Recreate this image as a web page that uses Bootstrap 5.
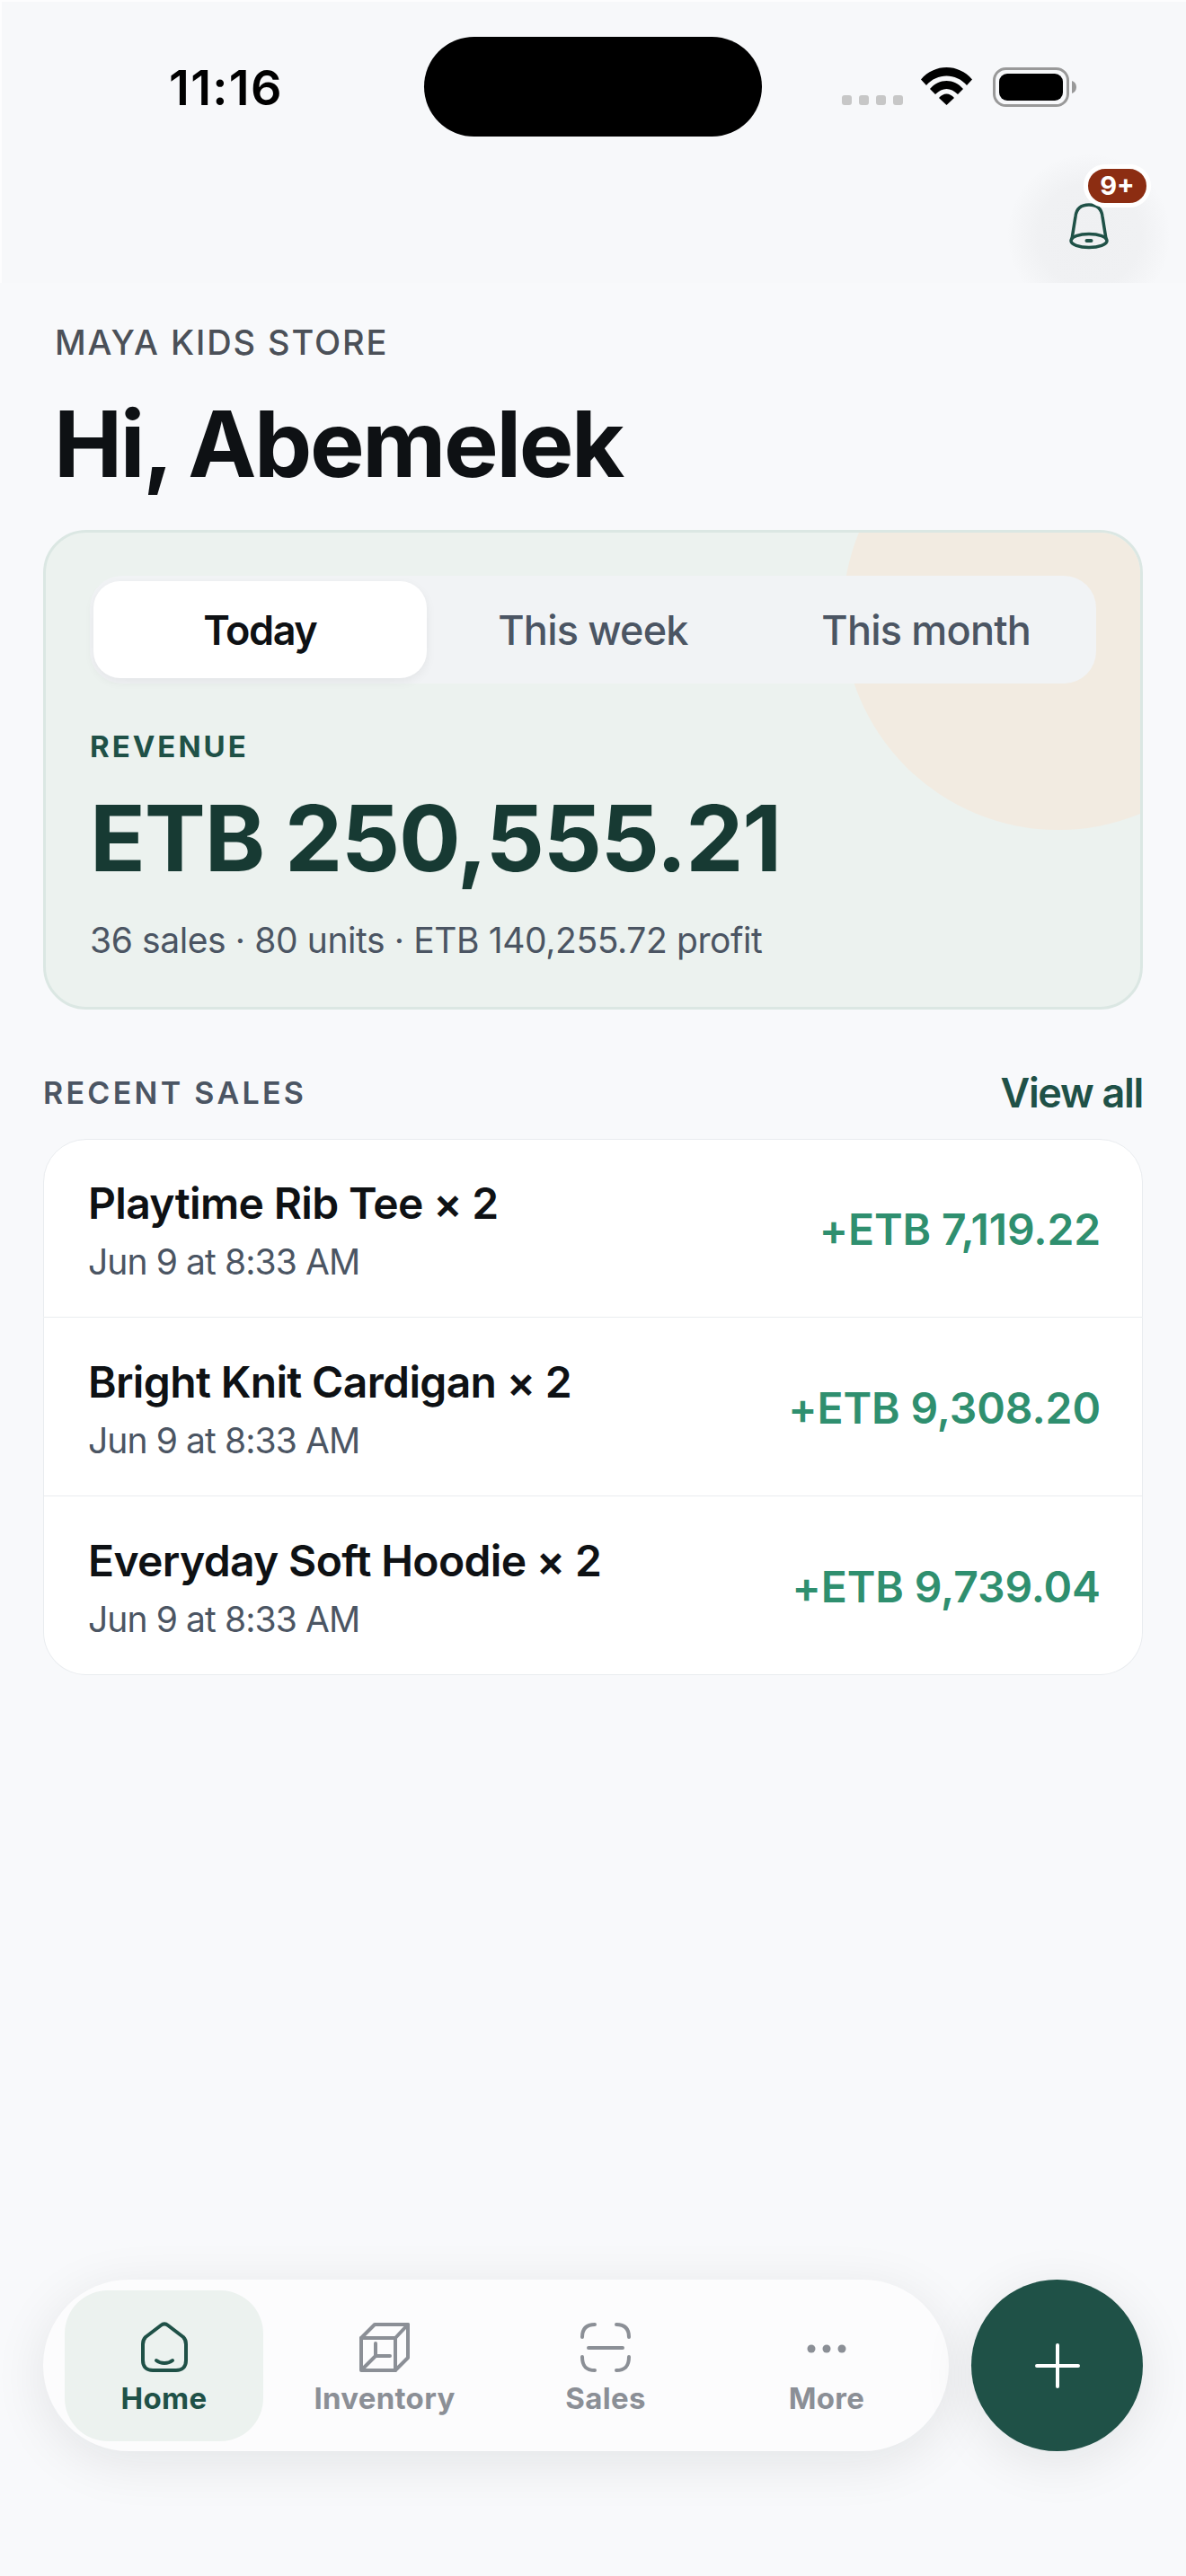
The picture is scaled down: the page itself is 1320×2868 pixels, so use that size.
<!DOCTYPE html>
<html lang="en">
<head>
    <meta charset="UTF-8">
    <meta name="viewport" content="width=device-width, initial-scale=1.0">
    <title>Maya Kids Store</title>
    <link href="https://cdn.jsdelivr.net/npm/bootstrap@5.3.0/dist/css/bootstrap.min.css" rel="stylesheet">
    <style>
        body { font-family: Inter, "Liberation Sans", sans-serif; background: #f8f9fb; color: #0e1114; width: 1320px; min-height: 2868px; }
        .screen { min-height: 2868px; }

        /* status bar + header strip */
        .top-strip { height: 315px; background: #f7f8fa; overflow: hidden; box-shadow: inset 2px 2px 0 #fdfdfe; }
        .status-row { height: 152px; padding-top: 41px; }
        .clock { width: 284px; margin-left: 188px; font-size: 54px; font-weight: 600; line-height: 1; padding-top: 30px; color: #000; letter-spacing: 1.3px; }
        .island { width: 376px; height: 111px; background: #000; border-radius: 56px; }
        .sig-dots { margin-left: 89px; margin-top: 65px; width: 68px; }
        .sig-dots i { width: 11px; height: 11px; border-radius: 3px; background: #c7c7c7; display: block; }
        .wifi-ic { margin-left: 20px; margin-top: 34px; }
        .batt-ic { margin-left: 23px; margin-top: 34px; }
        .bell-row { padding: 20px 18px 0 0; }
        .bell-btn { width: 180px; height: 180px; border-radius: 50%; border: 0; background: radial-gradient(circle, #eff0f2 0, #f0f1f3 45%, rgba(240, 241, 243, 0) 72%); position: relative; padding: 54px 0 0 0; display: flex; justify-content: center; align-items: flex-start; }
        .bell-count { position: absolute; left: 84px; top: 11px; width: 75px; height: 48px; border: 5px solid #fff; border-radius: 24px; background: #8c2d12; color: #fff; font-size: 29px; font-weight: 700; line-height: 38px; text-align: center; }

        .store-label { font-size: 38px; font-weight: 500; letter-spacing: 1.9px; color: #4b5058; line-height: 46px; margin: 43px 0 0 61px; }
        .hi-title { font-size: 102px; font-weight: 700; letter-spacing: -2.4px; line-height: 122px; margin: 29px 0 0 60px; color: #0e1114; }

        /* revenue card */
        .rev-card { margin: 35px 48px 0; height: 534px; background: #ecf2ef; border: 3px solid #dbe7e3; border-radius: 48px; overflow: hidden; position: relative; padding: 48px 49px 0; }
        .rev-blob { position: absolute; width: 480px; height: 480px; border-radius: 50%; background: #f2ebe1; left: 887px; top: -149px; }
        .range-tabs { position: relative; background: #f1f3f5; border-radius: 36px; height: 120px; padding: 6px 4px; }
        .range-tabs .btn { flex: 1 1 0; border: 0; border-radius: 30px; font-size: 45px; font-weight: 500; color: #4b5563; letter-spacing: -.8px; padding: 2px 0 0; }
        .range-tabs .btn.active { background: #fff; color: #0e1114; font-weight: 600; letter-spacing: -1.4px; box-shadow: 0 4px 12px rgba(15, 25, 25, .06); }
        .rev-label { position: relative; font-size: 33px; font-weight: 700; letter-spacing: 3px; color: #1f5147; line-height: 40px; margin-top: 50px; }
        .rev-amount { position: relative; font-size: 102px; font-weight: 700; color: #173a33; line-height: 118px; margin-top: 23px; letter-spacing: -1.2px; }
        .rev-sub { position: relative; font-size: 39px; color: #4b5563; line-height: 48px; margin-top: 31px; letter-spacing: -.4px; }

        /* recent sales */
        .sales-head { margin: 70px 48px 0; height: 45px; }
        .sales-title { font-size: 34px; font-weight: 600; letter-spacing: 3.3px; color: #4b5563; }
        .view-all { font-size: 45px; font-weight: 600; color: #1f5147; text-decoration: none; letter-spacing: -1.3px; }
        .sales-list { margin: 29px 48px 0; border-radius: 48px; --bs-list-group-border-color: #e9ecef; }
        .sales-list .list-group-item { height: 199px; padding: 0 46px 0 49px; }
        .sale-info { padding-top: 5px; }
        .sale-name { font-size: 48px; font-weight: 600; letter-spacing: -.65px; line-height: 58px; color: #0e1114; }
        .sale-when { font-size: 39px; color: #4b5563; line-height: 48px; margin-top: 12px; letter-spacing: -.9px; }
        .sale-total { font-size: 48px; font-weight: 600; color: #2f8f6f; letter-spacing: -.1px; padding-top: 3px; }

        /* bottom nav */
        .dock { margin-top: auto; padding: 0 48px 139px; }
        .dock-bar { width: 1008px; height: 191px; background: #fcfcfd; border-radius: 96px; box-shadow: 0 12px 60px rgba(15, 25, 25, .09); padding: 12px 0 12px 24px; }
        .dock-item { flex: 0 0 246px; height: 168px; border-radius: 48px; text-decoration: none; color: #8b8f96; font-size: 33px; font-weight: 700; padding-top: 34px; line-height: 40px; letter-spacing: .3px; }
        .dock-item svg { display: block; margin-bottom: 7px; }
        .dock-item.on { flex-basis: 221px; background: #ecf2ef; color: #1f5147; margin-right: 12px; }
        .fab-add { width: 191px; height: 191px; border-radius: 50%; background: #1f5147; border: 0; box-shadow: 0 12px 60px rgba(15, 25, 25, .09); padding: 0; }
    </style>
</head>
<body>
<div class="screen d-flex flex-column">

    <div class="top-strip">
        <div class="status-row d-flex align-items-start">
            <div class="clock">11:16</div>
            <div class="island"></div>
            <div class="sig-dots d-flex justify-content-between"><i></i><i></i><i></i><i></i></div>
            <svg class="wifi-ic" width="57" height="42" viewBox="0 0 57 42"><path d="M0 13.5C15-4.5 42-4.500 57 13.500L51 20C39 6 18 6 6 20Z" fill="#000"/><path d="M10 24C20 12 37 12 47 24L41 30C33 22 24 22 16 30Z" fill="#000"/><path d="M20 34C25 28 32 28 37 34L28.500 42Z" fill="#000"/></svg>
            <svg class="batt-ic" width="93" height="44" viewBox="0 0 93 44"><rect x="1.500" y="1.500" width="82" height="41" rx="13" fill="none" stroke="#999" stroke-width="3"/><rect x="7" y="7" width="71" height="30" rx="9" fill="#000"/><path d="M88 15c3 1 5 3.500 5 7s-2 6-5 7z" fill="#999"/></svg>
        </div>
        <div class="bell-row d-flex justify-content-end">
            <button class="bell-btn" type="button" aria-label="Notifications">
                <svg width="44" height="52" viewBox="0 0 44 52" fill="none" stroke="#1f5147" stroke-width="3.500" stroke-linecap="round"><path d="M3 40 7 15C8 6 14 2 22 2s14 4 15 13l4 25"/><ellipse cx="22" cy="42" rx="20" ry="7.500"/><path d="M19.500 42h5" stroke-width="4"/></svg>
                <span class="bell-count">9+</span>
            </button>
        </div>
    </div>

    <div class="store-label">MAYA KIDS STORE</div>
    <h1 class="hi-title">Hi, Abemelek</h1>

    <div class="rev-card">
        <div class="rev-blob"></div>
        <div class="range-tabs d-flex">
            <button class="btn active" type="button">Today</button>
            <button class="btn" type="button">This week</button>
            <button class="btn" type="button">This month</button>
        </div>
        <div class="rev-label">REVENUE</div>
        <div class="rev-amount">ETB 250,555.21</div>
        <div class="rev-sub">36 sales · 80 units · ETB 140,255.72 profit</div>
    </div>

    <div class="sales-head d-flex justify-content-between align-items-center">
        <span class="sales-title">RECENT SALES</span>
        <a class="view-all" href="#">View all</a>
    </div>

    <div class="list-group sales-list">
        <div class="list-group-item d-flex justify-content-between align-items-center">
            <div class="sale-info">
                <div class="sale-name">Playtime Rib Tee × 2</div>
                <div class="sale-when">Jun 9 at 8:33 AM</div>
            </div>
            <div class="sale-total">+ETB 7,119.22</div>
        </div>
        <div class="list-group-item d-flex justify-content-between align-items-center">
            <div class="sale-info">
                <div class="sale-name">Bright Knit Cardigan × 2</div>
                <div class="sale-when">Jun 9 at 8:33 AM</div>
            </div>
            <div class="sale-total">+ETB 9,308.20</div>
        </div>
        <div class="list-group-item d-flex justify-content-between align-items-center">
            <div class="sale-info">
                <div class="sale-name">Everyday Soft Hoodie × 2</div>
                <div class="sale-when">Jun 9 at 8:33 AM</div>
            </div>
            <div class="sale-total">+ETB 9,739.04</div>
        </div>
    </div>

    <div class="dock d-flex justify-content-between align-items-start">
        <nav class="dock-bar d-flex">
            <a class="dock-item on d-flex flex-column align-items-center" href="#">
                <svg width="60" height="59" viewBox="0 0 60 59" fill="none" stroke="#1f5147" stroke-width="4" stroke-linecap="round" stroke-linejoin="round"><path d="M6 26c0-3 1-6 3-8L26 5c2.500-2 5.500-2 8 0L51 18c2 2 3 5 3 8v18c0 7-4 11-11 11H17c-7 0-11-4-11-11Z"/><path d="M21 44c5 4 13 4 18 0"/></svg>
                Home
            </a>
            <a class="dock-item d-flex flex-column align-items-center" href="#">
                <svg width="60" height="59" viewBox="0 0 60 59" fill="none" stroke="#8b8f96" stroke-width="4" stroke-linecap="round" stroke-linejoin="round"><path d="M4 19 19 4h37v37L42 55H4Z"/><path d="M4 19h38v36M42 19 56 4"/><path d="M20 25v14h16M20 39 5 54"/></svg>
                Inventory
            </a>
            <a class="dock-item d-flex flex-column align-items-center" href="#">
                <svg width="60" height="59" viewBox="0 0 60 59" fill="none" stroke="#8b8f96" stroke-width="4" stroke-linecap="round"><path d="M4 18C4 9 8 4 18 4M42 4c10 0 14 5 14 14M56 40c0 10-4 15-14 15M18 55C8 55 4 50 4 40M11 30h38"/></svg>
                Sales
            </a>
            <a class="dock-item d-flex flex-column align-items-center" href="#">
                <svg width="60" height="59" viewBox="0 0 60 59" fill="#8b8f96"><circle cx="13" cy="31" r="4.500"/><circle cx="30" cy="31" r="4.500"/><circle cx="47" cy="31" r="4.500"/></svg>
                More
            </a>
        </nav>
        <button class="fab-add" type="button" aria-label="Add">
            <svg width="50" height="50" viewBox="0 0 50 50" stroke="#fff" stroke-width="4" stroke-linecap="round"><path d="M25 2v46M2 25h46"/></svg>
        </button>
    </div>
</div>
<script src="https://cdn.jsdelivr.net/npm/bootstrap@5.3.0/dist/js/bootstrap.bundle.min.js"></script>
</body>
</html>
